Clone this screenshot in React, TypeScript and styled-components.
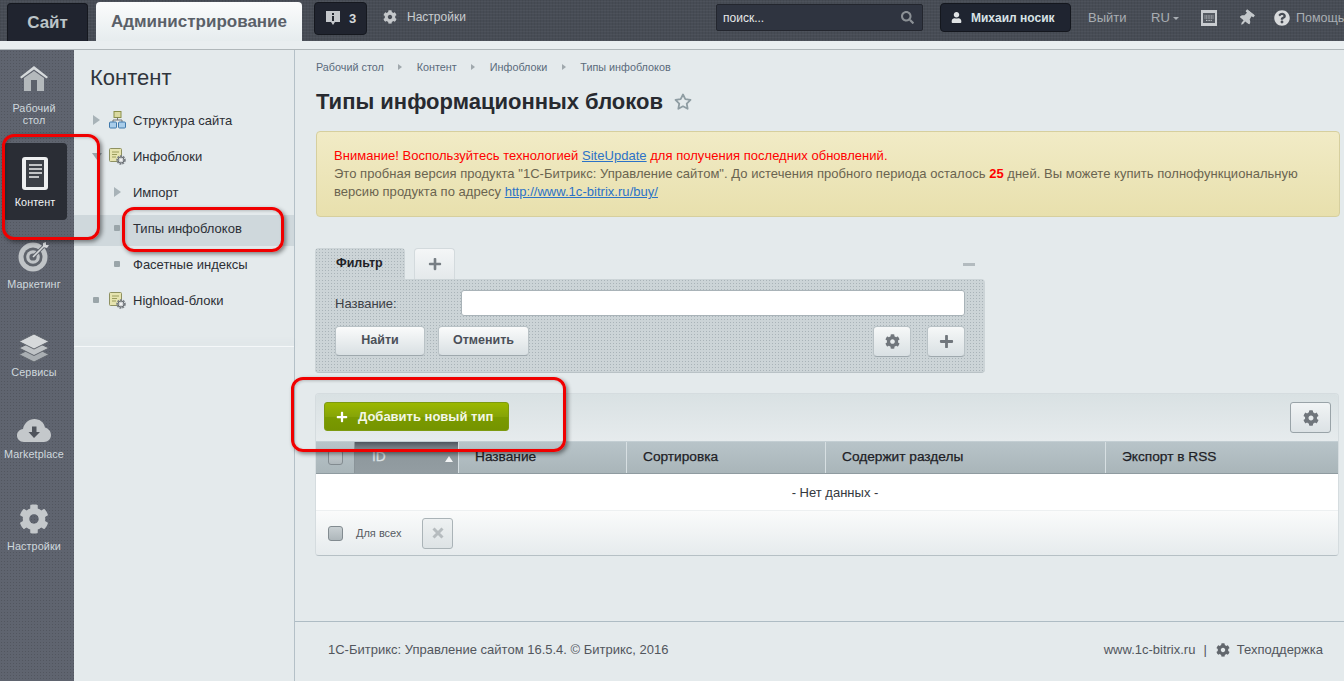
import React from "react";
import styled, { createGlobalStyle } from "styled-components";
import { FaCog, FaPlus, FaQuestionCircle, FaSearch, FaThumbtack, FaUser } from "react-icons/fa";
import { FiStar } from "react-icons/fi";

const GlobalStyle = createGlobalStyle`
  html, body {
    margin: 0;
    padding: 0;
    height: 100%;
    overflow: hidden;
    background: #e4eaec;
    font-family: "Liberation Sans", Arial, sans-serif;
  }
  * { box-sizing: border-box; }
`;

const HouseIcon = () => (
  <svg width="30" height="27" viewBox="0 0 30 27">
    <path d="M15 1 L29 12 L27.5 13.5 L15 4.5 L2.5 13.5 L1 12 Z" fill="#d6dadc" />
    <path
      fillRule="evenodd"
      d="M5 13 L15 6 L25 13 V26 H5 Z M12 15 V26 H18 V15 Z"
      fill="#b4b9bc"
    />
    <rect x="12" y="15" width="6" height="11" fill="#5c616b" />
  </svg>
);

const DocIcon = () => (
  <svg width="26" height="33" viewBox="0 0 26 33">
    <rect x="0" y="0" width="26" height="33" rx="3" fill="#eef0f1" />
    <rect x="4" y="3" width="18" height="27" fill="#3c4047" />
    <path d="M7 8h13M7 12h13M7 16h13M7 20h10" stroke="#eef0f1" strokeWidth="1.6" />
  </svg>
);

const TargetIcon = () => (
  <svg width="32" height="30" viewBox="0 0 32 30">
    <circle cx="15" cy="15" r="14.5" fill="#c0c4c7" />
    <circle cx="15" cy="15" r="9.5" fill="#5f646c" />
    <circle cx="15" cy="15" r="6.8" fill="#c0c4c7" />
    <circle cx="15" cy="15" r="3.6" fill="#5f646c" />
    <path d="M15 15 L27 3" stroke="#5f646c" strokeWidth="3.4" />
    <path d="M15 15 L27 3" stroke="#d6d9db" strokeWidth="1.6" />
    <path d="M25 5 V1 L28 0 V3 H31 L29 6 Z" fill="#d6d9db" />
  </svg>
);

const LayersIcon = () => (
  <svg width="32" height="29" viewBox="0 0 32 29">
    <path d="M16 13 L1 20.5 L16 28 L31 20.5 Z" fill="#a9aeb2" stroke="#5f646c" strokeWidth="1" />
    <path d="M16 7 L1 14 L16 21.5 L31 14 Z" fill="#bfc3c6" stroke="#5f646c" strokeWidth="1" />
    <path d="M16 0 L1 7.5 L16 15 L31 7.5 Z" fill="#d6d9db" stroke="#5f646c" strokeWidth="1" />
  </svg>
);

const CloudIcon = () => (
  <svg width="34" height="24" viewBox="0 0 34 24">
    <path
      d="M7 23 C2.5 23 0 20 0 16.5 C0 13 2.5 10.5 6 10 C7 4 12 0 17.5 0 C23 0 27 3.5 28 8.5 C31.5 9.5 34 12.5 34 16 C34 20 31 23 27 23 Z"
      fill="#c4c8cb"
    />
    <path d="M15 7.5 H19.5 V13 H23 L17 19 L11.5 13 H15 Z" fill="#4f545c" />
  </svg>
);

const BranchIcon = () => (
  <svg width="17" height="18" viewBox="0 0 17 18">
    <rect x="5" y="0.5" width="7" height="6" fill="#d9d9a0" stroke="#8a8f4a" />
    <path d="M8.5 6.5 V9 M4 11 V9 H13 V11" stroke="#777" fill="none" />
    <rect x="0.5" y="11" width="7" height="6" rx="1" fill="#a9cdea" stroke="#3f78ab" />
    <rect x="9.5" y="11" width="7" height="6" rx="1" fill="#a9cdea" stroke="#3f78ab" />
  </svg>
);

const BlockIcon = () => (
  <svg width="17" height="17" viewBox="0 0 17 17">
    <rect x="0.5" y="0.5" width="12" height="13" rx="1" fill="#e6e4b0" stroke="#8e9161" />
    <path d="M3 4h7M3 6.5h5M3 9h4" stroke="#9a9c5c" />
    <circle cx="12" cy="12" r="3.6" fill="none" stroke="#7d8388" strokeWidth="2.4" strokeDasharray="1.8 0.8" />
    <circle cx="12" cy="12" r="3" fill="#cfd3d5" stroke="#686d72" strokeWidth="1" />
    <circle cx="12" cy="12" r="1.2" fill="#f2f3f4" />
  </svg>
);

const KeyboardIcon = () => (
  <svg width="16" height="16" viewBox="0 0 16 16">
    <rect width="16" height="16" fill="#c9ccd0" />
    <rect x="2" y="3" width="12" height="10" fill="#555a62" />
    <path d="M3.5 6h9M3.5 8h9M5 10.4h6" stroke="#c9ccd0" strokeWidth="1" strokeDasharray="1 0.6" />
  </svg>
);

const InfoIcon = () => (
  <svg width="14" height="15" viewBox="0 0 14 15">
    <path d="M0 0H14V11H9L7 14L5 11H0Z" fill="#c5c8cc" />
    <rect x="6" y="2" width="2" height="2" fill="#23272f" />
    <rect x="6" y="5" width="2" height="5" fill="#23272f" />
  </svg>
);

const App: React.FC = () => {
  return (
    <Page>
      <GlobalStyle />
      <TopBar>
        <SiteTab>Сайт</SiteTab>
        <AdminTab>Администрирование</AdminTab>
        <Badge>
          <InfoIcon />
          <span>3</span>
        </Badge>
        <TopSettings>
          <FaCog />
          <span>Настройки</span>
        </TopSettings>
        <Search>
          <span>поиск...</span>
          <FaSearch />
        </Search>
        <UserBtn>
          <FaUser />
          <span>Михаил носик</span>
        </UserBtn>
        <TopLink $w={63} $ml={17}>
          Выйти
        </TopLink>
        <TopLink $w={50}>
          RU
          <Caret />
        </TopLink>
        <KeyHold>
          <KeyboardIcon />
        </KeyHold>
        <PinHold>
          <FaThumbtack />
        </PinHold>
        <HelpHold>
          <FaQuestionCircle />
          <span>Помощь</span>
        </HelpHold>
      </TopBar>
      <Strip />
      <Body>
        <Rail>
          <RailItem $h={93} $pad={15} $gap={10}>
            <HouseIcon />
            <RailLabel>
              Рабочий
              <br />
              стол
            </RailLabel>
          </RailItem>
          <RailActive>
            <DocIcon />
            <RailLabel $white>Контент</RailLabel>
          </RailActive>
          <RailItem $h={90} $pad={22} $gap={6}>
            <TargetIcon />
            <RailLabel>Маркетинг</RailLabel>
          </RailItem>
          <RailItem $h={84} $pad={24} $gap={3}>
            <LayersIcon />
            <RailLabel>Сервисы</RailLabel>
          </RailItem>
          <RailItem $h={88} $pad={25} $gap={5}>
            <CloudIcon />
            <RailLabel>Marketplace</RailLabel>
          </RailItem>
          <RailItem $h={90} $pad={22} $gap={6}>
            <RailGear>
              <FaCog />
            </RailGear>
            <RailLabel>Настройки</RailLabel>
          </RailItem>
        </Rail>

        <Nav>
          <NavTitle>Контент</NavTitle>
          <NavRow>
            <Arrow />
            <BranchIcon />
            <NavText>Структура сайта</NavText>
          </NavRow>
          <NavRow>
            <ArrowDown />
            <BlockIcon />
            <NavText>Инфоблоки</NavText>
          </NavRow>
          <NavRow $sub>
            <Arrow $sub />
            <NavText $sub>Импорт</NavText>
          </NavRow>
          <NavRow $sub $selected>
            <Dot />
            <NavText $sub>Типы инфоблоков</NavText>
          </NavRow>
          <NavRow $sub>
            <Dot />
            <NavText $sub>Фасетные индексы</NavText>
          </NavRow>
          <NavRow>
            <TopDot />
            <BlockIcon />
            <NavText>Highload-блоки</NavText>
          </NavRow>
          <NavDivider />
        </Nav>

        <Main>
          <Crumbs>
            <Crumb>Рабочий стол</Crumb>
            <CrumbArrow />
            <Crumb>Контент</Crumb>
            <CrumbArrow />
            <Crumb>Инфоблоки</Crumb>
            <CrumbArrow />
            <Crumb>Типы инфоблоков</Crumb>
          </Crumbs>
          <TitleRow>
            <Title>Типы информационных блоков</Title>
            <FiStar />
          </TitleRow>
          <Alert>
            <AlertLine>
              <RedText>Внимание! Воспользуйтесь технологией </RedText>
              <AlertLink>SiteUpdate</AlertLink>
              <RedText> для получения последних обновлений.</RedText>
            </AlertLine>
            <AlertLine>
              <span>Это пробная версия продукта "1С-Битрикс: Управление сайтом". До истечения пробного периода осталось </span>
              <Days>25</Days>
              <span> дней. Вы можете купить полнофункциональную</span>
            </AlertLine>
            <AlertLine>
              <span>версию продукта по адресу </span>
              <AlertLink>http://www.1c-bitrix.ru/buy/</AlertLink>
            </AlertLine>
          </Alert>

          <FilterBlock>
            <FilterTabs>
              <FilterTab>Фильтр</FilterTab>
              <PlusTab>
                <FaPlus />
              </PlusTab>
              <Minus />
            </FilterTabs>
            <FilterPanel>
              <FilterField>
                <FieldLabel>Название:</FieldLabel>
                <FieldInput />
              </FilterField>
              <FilterButtons>
                <FilterBtn $w={90}>Найти</FilterBtn>
                <FilterBtn $w={91}>Отменить</FilterBtn>
                <IconBtn $ml="auto">
                  <FaCog />
                </IconBtn>
                <IconBtn>
                  <FaPlus />
                </IconBtn>
              </FilterButtons>
            </FilterPanel>
          </FilterBlock>

          <Grid>
            <GridBar>
              <AddBtn>
                <FaPlus />
                <span>Добавить новый тип</span>
              </AddBtn>
              <GridGear>
                <FaCog />
              </GridGear>
            </GridBar>
            <GridHead>
              <CheckCell>
                <CheckBox />
              </CheckCell>
              <HeadCell $w={104} $active>
                ID
                <SortArrow />
              </HeadCell>
              <HeadCell $w={168}>Название</HeadCell>
              <HeadCell $w={199}>Сортировка</HeadCell>
              <HeadCell $w={280}>Содержит разделы</HeadCell>
              <HeadCell $w={233}>Экспорт в RSS</HeadCell>
            </GridHead>
            <EmptyRow>- Нет данных -</EmptyRow>
            <GridFoot>
              <CheckBox />
              <ForAll>Для всех</ForAll>
              <DeleteBtn>
                <svg width="12" height="12" viewBox="0 0 12 12">
                  <path d="M1.5 1.5 L10.5 10.5 M10.5 1.5 L1.5 10.5" stroke="#b6bcbf" strokeWidth="3" />
                </svg>
              </DeleteBtn>
            </GridFoot>
          </Grid>

          <Footer>
            <span>1С-Битрикс: Управление сайтом 16.5.4. © Битрикс, 2016</span>
            <FootRight>
              <span>www.1c-bitrix.ru</span>
              <FootSep>|</FootSep>
              <FaCog />
              <span>Техподдержка</span>
            </FootRight>
          </Footer>
        </Main>

        <RedMark $x={2} $y={84} $w={98} $h={106} />
        <RedMark $x={122} $y={157} $w={162} $h={45} />
        <RedMark $x={291} $y={327} $w={275} $h={75} />
      </Body>
    </Page>
  );
};

export default App;

const Page = styled.div`
  width: 1344px;
  height: 681px;
  overflow: hidden;
  display: flex;
  flex-direction: column;
  background: #e4eaec;
`;

const TopBar = styled.div`
  height: 41px;
  flex: none;
  display: flex;
  align-items: flex-start;
  padding-left: 7px;
  background-color: #474c55;
  background-image: repeating-linear-gradient(0deg, rgba(255, 255, 255, 0.035) 0 1px, transparent 1px 3px),
    repeating-linear-gradient(90deg, rgba(0, 0, 0, 0.06) 0 1px, transparent 1px 3px);
  > * {
    flex: none;
  }
`;

const SiteTab = styled.div`
  width: 81px;
  height: 38px;
  margin-top: 3px;
  background: #20242f;
  border: 1px solid #15181f;
  border-bottom: 0;
  border-radius: 4px 4px 0 0;
  color: #bcc4c8;
  font-size: 17px;
  font-weight: 700;
  line-height: 37px;
  text-align: center;
`;

const AdminTab = styled.div`
  width: 206px;
  height: 39px;
  margin: 2px 0 0 8px;
  background: linear-gradient(#fbfcfc, #e6ecee);
  border-radius: 4px 4px 0 0;
  color: #5a6068;
  font-size: 17px;
  font-weight: 700;
  line-height: 39px;
  text-align: center;
`;

const Badge = styled.div`
  width: 53px;
  height: 33px;
  margin: 2px 0 0 12px;
  background: #20242f;
  border: 1px solid #15181f;
  border-radius: 4px;
  display: flex;
  align-items: center;
  gap: 9px;
  padding-left: 11px;
  color: #d4d8da;
  font-size: 13px;
  font-weight: 700;
`;

const TopSettings = styled.div`
  margin: 10px 0 0 16px;
  width: 333px;
  display: flex;
  align-items: center;
  gap: 10px;
  color: #c9cdd0;
  font-size: 12px;
  svg {
    font-size: 14px;
    color: #c4c7ca;
  }
`;

const Search = styled.div`
  width: 207px;
  height: 27px;
  margin-top: 4px;
  background: #2f3440;
  border: 1px solid #23262e;
  border-radius: 2px;
  display: flex;
  align-items: center;
  justify-content: space-between;
  padding: 0 8px 0 6px;
  color: #e6e8ea;
  font-size: 12px;
  svg {
    font-size: 13px;
    color: #8b9095;
  }
`;

const UserBtn = styled.div`
  width: 131px;
  height: 29px;
  margin: 3px 0 0 17px;
  background: #1f2430;
  border: 1px solid #14171e;
  border-radius: 4px;
  display: flex;
  align-items: center;
  gap: 9px;
  padding-left: 10px;
  color: #d8e2e6;
  font-size: 12px;
  font-weight: 700;
  svg {
    font-size: 11px;
    color: #e0e3e5;
  }
`;

const TopLink = styled.div<{ $w: number; $ml?: number }>`
  width: ${({ $w }) => $w}px;
  margin: 10px 0 0 ${({ $ml }) => $ml || 0}px;
  color: #a9aeb3;
  font-size: 13px;
`;

const Caret = styled.i`
  display: inline-block;
  margin-left: 3px;
  vertical-align: middle;
  border-top: 3px solid #a9aeb3;
  border-left: 3px solid transparent;
  border-right: 3px solid transparent;
`;

const KeyHold = styled.div`
  margin-top: 10px;
  height: 16px;
`;

const PinHold = styled.div`
  margin: 10px 0 0 20px;
  color: #c4c8cb;
  font-size: 16px;
  transform: rotate(38deg);
`;

const HelpHold = styled.div`
  margin: 10px 0 0 21px;
  display: flex;
  align-items: center;
  gap: 6px;
  color: #a9aeb3;
  font-size: 12.5px;
  white-space: nowrap;
  svg {
    font-size: 16px;
    color: #d8dadc;
  }
`;

const Strip = styled.div`
  height: 9px;
  flex: none;
  background: #e9eef0;
  border-bottom: 1px solid #b0b7ba;
`;

const Body = styled.div`
  flex: 1;
  min-height: 0;
  display: flex;
  position: relative;
`;

const Rail = styled.div`
  width: 74px;
  flex: none;
  background-color: #5f646f;
  background-image: radial-gradient(rgba(0, 0, 0, 0.14) 0.6px, transparent 0.8px);
  background-size: 3px 3px;
  display: flex;
  flex-direction: column;
`;

const RailItem = styled.div<{ $h: number; $pad: number; $gap: number }>`
  height: ${({ $h }) => $h}px;
  padding: ${({ $pad }) => $pad}px 6px 0 0;
  display: flex;
  flex-direction: column;
  align-items: center;
  flex: none;
  > div {
    margin-top: ${({ $gap }) => $gap}px;
  }
  > div:first-child {
    margin-top: 0;
  }
`;

const RailActive = styled.div`
  width: 64px;
  height: 77px;
  flex: none;
  margin-left: 3px;
  padding-top: 14px;
  background: #2a2d35;
  border-radius: 4px;
  display: flex;
  flex-direction: column;
  align-items: center;
  > div {
    margin-top: 6px;
  }
`;

const RailLabel = styled.div<{ $white?: boolean }>`
  color: ${({ $white }) => ($white ? "#f2f4f5" : "#cfd8dd")};
  font-size: 10.8px;
  letter-spacing: 0.1px;
  line-height: 12px;
  text-align: center;
  white-space: nowrap;
`;

const RailGear = styled.div`
  height: 30px;
  color: #c4c8cb;
  font-size: 30px;
  line-height: 30px;
  svg {
    display: block;
  }
`;

const Nav = styled.div`
  width: 221px;
  flex: none;
  background: #e4eaec;
  border-right: 1px solid #b4c0c7;
  padding-top: 15px;
`;

const NavTitle = styled.div`
  height: 37px;
  margin-left: 16px;
  color: #30353c;
  font-size: 22px;
  line-height: 25px;
`;

const NavRow = styled.div<{ $sub?: boolean; $selected?: boolean }>`
  height: 36px;
  display: flex;
  align-items: center;
  padding-left: ${({ $sub }) => ($sub ? "40px" : "35px")};
  position: relative;
  background: ${({ $selected }) => ($selected ? "linear-gradient(transparent 5px, #cfd8dc 5px)" : "transparent")};
`;

const NavText = styled.span<{ $sub?: boolean }>`
  margin-left: ${({ $sub }) => ($sub ? "19px" : "7px")};
  color: #2c2f35;
  font-size: 13px;
  white-space: nowrap;
`;

const Arrow = styled.i<{ $sub?: boolean }>`
  position: absolute;
  left: ${({ $sub }) => ($sub ? "40px" : "19px")};
  border-left: 7px solid #a8b3b8;
  border-top: 5px solid transparent;
  border-bottom: 5px solid transparent;
`;

const ArrowDown = styled.i`
  position: absolute;
  left: 18px;
  border-top: 7px solid #9aa5aa;
  border-left: 5px solid transparent;
  border-right: 5px solid transparent;
`;

const Dot = styled.i`
  width: 6px;
  height: 6px;
  border-radius: 1px;
  background: #9aa5a9;
  position: absolute;
  left: 40px;
`;

const TopDot = styled(Dot)`
  left: 19px;
`;

const NavDivider = styled.div`
  margin-top: 28px;
  height: 1px;
  background: #f5f8f9;
  box-shadow: 0 -3px 6px rgba(120, 135, 145, 0.22);
`;

const Main = styled.div`
  flex: 1;
  min-width: 0;
  display: flex;
  flex-direction: column;
  padding-top: 11px;
`;

const Crumbs = styled.div`
  height: 12px;
  display: flex;
  align-items: center;
  margin-left: 21px;
  gap: 10px;
`;

const Crumb = styled.span`
  color: #5a6b7b;
  font-size: 10.8px;
  white-space: nowrap;
`;

const CrumbArrow = styled.i`
  margin: 0 4.5px;
  border-left: 4px solid #a0a8ad;
  border-top: 3.5px solid transparent;
  border-bottom: 3.5px solid transparent;
`;

const TitleRow = styled.div`
  display: flex;
  align-items: center;
  margin: 16px 0 0 21px;
  height: 26px;
  svg {
    margin-left: 11px;
    width: 18px;
    height: 18px;
    color: #8f9da3;
    stroke-width: 2.4;
  }
`;

const Title = styled.h1`
  margin: 0;
  color: #272a30;
  font-size: 22px;
  font-weight: 700;
  line-height: 26px;
  white-space: nowrap;
`;

const Alert = styled.div`
  width: 1024px;
  height: 86px;
  margin: 16px 0 0 21px;
  padding: 15px 34px 0 17px;
  background: linear-gradient(#f1ebc6, #e8e0ad);
  border: 1px solid #d6cf9e;
  border-radius: 4px;
  color: #6a6450;
  font-size: 13px;
  letter-spacing: 0.03px;
  line-height: 18px;
`;

const AlertLine = styled.div`
  height: 18px;
  white-space: pre;
`;

const RedText = styled.span`
  color: #ff0000;
`;

const AlertLink = styled.span`
  color: #2c72c7;
  text-decoration: underline;
`;

const Days = styled.b`
  color: #ff0000;
`;

const FilterBlock = styled.div`
  width: 670px;
  margin: 31px 0 0 20px;
`;

const FilterTabs = styled.div`
  height: 31px;
  display: flex;
  align-items: flex-end;
`;

const FilterTab = styled.div`
  width: 90px;
  height: 31px;
  background-color: #ccd4d7;
  background-image: radial-gradient(rgba(80, 95, 105, 0.28) 0.6px, transparent 0.8px);
  background-size: 3px 3px;
  border-radius: 4px 4px 0 0;
  color: #1e2126;
  font-size: 12.5px;
  font-weight: 700;
  line-height: 30px;
  padding-left: 21px;
`;

const PlusTab = styled.div`
  width: 41px;
  height: 31px;
  margin-left: 9px;
  background: linear-gradient(#f4f6f7, #e4e9eb);
  border: 1px solid #d3dadd;
  border-bottom: 0;
  border-radius: 4px 4px 0 0;
  display: flex;
  align-items: center;
  justify-content: center;
  color: #777e84;
  font-size: 14px;
`;

const Minus = styled.i`
  margin-left: auto;
  margin-right: 10px;
  margin-bottom: 13px;
  width: 12px;
  height: 3px;
  background: #b3bbbf;
`;

const FilterPanel = styled.div`
  height: 94px;
  padding: 11px 20px 0 20px;
  background-color: #ccd4d7;
  background-image: radial-gradient(rgba(80, 95, 105, 0.28) 0.6px, transparent 0.8px);
  background-size: 3px 3px;
  border-bottom: 1px solid #b9c2c6;
  border-radius: 0 4px 4px 4px;
`;

const FilterField = styled.div`
  display: flex;
  align-items: center;
  height: 26px;
`;

const FieldLabel = styled.span`
  width: 126px;
  color: #3c3f46;
  font-size: 13px;
`;

const FieldInput = styled.div`
  flex: 1;
  height: 26px;
  background: #fff;
  border: 1px solid #a9b3b8;
  border-radius: 3px;
`;

const FilterButtons = styled.div`
  display: flex;
  gap: 13px;
  margin-top: 10px;
`;

const FilterBtn = styled.div<{ $w: number }>`
  width: ${({ $w }) => $w}px;
  height: 30px;
  background: linear-gradient(#fafbfb, #d9e0e3);
  border: 1px solid #b9c2c6;
  border-bottom-color: #9ea8ad;
  border-radius: 4px;
  color: #4b5059;
  font-size: 12.5px;
  font-weight: 700;
  line-height: 27px;
  text-align: center;
`;

const IconBtn = styled.div<{ $ml?: string }>`
  width: 38px;
  height: 31px;
  margin-left: ${({ $ml }) => $ml || "3px"};
  background: linear-gradient(#f6f8f8, #d9e0e3);
  border: 1px solid #b9c2c6;
  border-bottom-color: #9ea8ad;
  border-radius: 4px;
  display: flex;
  align-items: center;
  justify-content: center;
  color: #70767c;
  font-size: 15px;
`;

const Grid = styled.div`
  width: 1024px;
  margin: 20px 0 0 20px;
  border: 1px solid #d5dcdf;
  border-bottom-color: #b6c0c5;
  border-radius: 4px;
  overflow: hidden;
`;

const GridBar = styled.div`
  height: 47px;
  padding: 8px 7px 0 8px;
  display: flex;
  justify-content: space-between;
  align-items: flex-start;
  background: linear-gradient(#d9e1e3, #e6ebed);
`;

const AddBtn = styled.div`
  width: 185px;
  height: 29px;
  display: flex;
  align-items: center;
  padding-left: 11px;
  gap: 10px;
  background: linear-gradient(#9bb800 0, #86a408 50%, #7a9a00 51%, #759400);
  border: 1px solid #7d9a10;
  border-radius: 3px;
  color: #f4f7e6;
  font-size: 13px;
  font-weight: 700;
  svg {
    font-size: 12px;
    color: #fff;
  }
`;

const GridGear = styled.div`
  width: 41px;
  height: 31px;
  background: linear-gradient(#f1f4f5, #dce2e5);
  border: 1px solid #99a3a8;
  border-radius: 3px;
  display: flex;
  align-items: center;
  justify-content: center;
  color: #70767c;
  font-size: 16px;
`;

const GridHead = styled.div`
  height: 33px;
  display: flex;
  background: linear-gradient(#b8c4c9, #a9b5b9);
  border-top: 1px solid #c3ced3;
  border-bottom: 1px solid #8f9ba0;
`;

const CheckCell = styled.div`
  width: 39px;
  display: flex;
  align-items: center;
  padding-left: 12px;
`;

const CheckBox = styled.div`
  width: 15px;
  height: 15px;
  flex: none;
  background: linear-gradient(#c9d0d3, #aeb7bb);
  border: 1px solid #828b90;
  border-radius: 3px;
`;

const HeadCell = styled.div<{ $w: number; $active?: boolean }>`
  width: ${({ $w }) => $w}px;
  flex: none;
  position: relative;
  padding-left: ${({ $active }) => ($active ? "17px" : "16px")};
  border-left: 1px solid ${({ $active }) => ($active ? "#8a9499" : "#d7dfe2")};
  background: ${({ $active }) => ($active ? "linear-gradient(#4f555e 0, #8d979c 30%, #939da2)" : "transparent")};
  color: ${({ $active }) => ($active ? "#d9e0e3" : "#1e2126")};
  font-size: 13.7px;
  -webkit-text-stroke: 0.25px currentColor;
  line-height: 30px;
`;

const SortArrow = styled.i`
  position: absolute;
  right: 5px;
  top: 14px;
  border-bottom: 6px solid #f2f4f5;
  border-left: 4px solid transparent;
  border-right: 4px solid transparent;
`;

const EmptyRow = styled.div`
  height: 36px;
  padding-left: 16px;
  background: #fff;
  color: #34383e;
  font-size: 13px;
  line-height: 38px;
  text-align: center;
`;

const GridFoot = styled.div`
  height: 45px;
  display: flex;
  align-items: center;
  padding-left: 12px;
  background: linear-gradient(#fafbfb, #e6ebed);
  border-top: 1px solid #edf0f1;
`;

const ForAll = styled.span`
  margin-left: 13px;
  width: 66px;
  color: #565b63;
  font-size: 11px;
`;

const DeleteBtn = styled.div`
  width: 31px;
  height: 31px;
  background: linear-gradient(#eef1f2, #dde3e5);
  border: 1px solid #aab3b7;
  border-radius: 3px;
  display: flex;
  align-items: center;
  justify-content: center;
`;

const Footer = styled.div`
  margin-top: 65px;
  height: 60px;
  flex: none;
  border-top: 1px solid #aebcc4;
  display: flex;
  align-items: flex-start;
  justify-content: space-between;
  padding: 20px 21px 0 33px;
  color: #52565d;
  font-size: 13px;
`;

const FootRight = styled.div`
  display: flex;
  align-items: center;
  gap: 7px;
  svg {
    font-size: 14px;
    color: #62676d;
  }
`;

const FootSep = styled.span`
  margin: 0 2px 0 1px;
`;

const RedMark = styled.div<{ $x: number; $y: number; $w: number; $h: number }>`
  position: absolute;
  left: ${({ $x }) => $x}px;
  top: ${({ $y }) => $y}px;
  width: ${({ $w }) => $w}px;
  height: ${({ $h }) => $h}px;
  border: 3px solid #f00000;
  border-radius: 12px;
  box-shadow: 2px 2px 4px rgba(0, 0, 0, 0.45), inset 1px 1px 3px rgba(0, 0, 0, 0.2);
  pointer-events: none;
`;
